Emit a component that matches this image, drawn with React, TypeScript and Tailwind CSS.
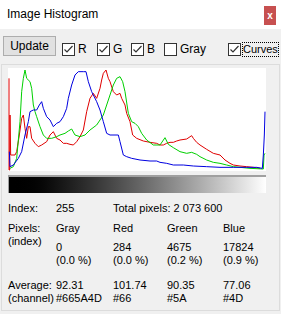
import React from "react";

const red =
  "27,70 27,345 29,345 30,180 32,300 45,300 50,290 58,240 65,190 70,180 75,220 80,250 85,215 90,215 95,250 105,265 115,275 125,270 140,260 150,240 160,230 170,250 180,255 190,265 200,265 210,268 220,270 230,260 240,245 250,225 260,170 270,130 280,115 290,130 300,100 305,75 310,55 318,45 325,70 330,80 340,110 350,120 360,115 365,130 375,150 380,175 390,200 398,240 410,250 430,258 450,262 470,265 480,270 490,270 500,265 510,262 520,262 530,258 540,255 560,252 575,242 580,250 590,262 600,270 620,283 640,295 660,300 675,315 690,325 700,330 720,333 740,335 760,337 780,340";

const green =
  "30,340 40,335 50,310 60,200 65,110 70,70 75,45 80,70 90,80 95,100 100,150 105,170 110,185 120,215 130,240 140,250 155,250 170,245 180,240 195,235 205,228 215,222 225,240 240,245 255,240 270,225 290,210 300,195 310,180 320,150 330,120 340,90 350,70 360,65 368,80 375,110 385,175 395,200 405,205 415,215 425,235 440,255 460,270 480,270 495,248 505,268 520,278 540,290 560,295 575,292 590,298 600,305 620,315 640,322 660,325 680,330 700,335 720,337 750,340 790,342 792,300 795,295";

const blue =
  "28,290 30,335 40,330 55,310 65,290 75,240 85,200 90,170 100,165 110,165 118,150 125,140 130,160 140,185 150,195 160,215 170,205 180,200 190,185 200,160 205,130 215,90 225,60 235,50 250,50 258,50 265,80 275,110 290,140 300,165 310,200 320,235 330,240 345,240 355,240 360,260 370,300 380,305 395,310 420,315 450,318 470,318 480,322 500,325 520,330 550,330 580,333 620,335 660,337 700,337 740,337 770,337 787,340 790,300 793,240 795,170";

function Check({ checked, label, focus, w }: { checked: boolean; label: string; focus?: boolean; w?: string }) {
  return (
    <div className={`flex items-center shrink-0 ${focus ? "gap-[1px]" : "gap-[3px]"} ${w ?? ""}`}>
      <div className="w-[13px] h-[13px] shrink-0 border border-[#333] bg-white flex items-center justify-center">
        {checked && (
          <svg width="11" height="11" viewBox="0 0 11 11">
            <polyline points="1.5,5.5 4,8 9.5,2" fill="none" stroke="#333" strokeWidth="1.2" />
          </svg>
        )}
      </div>
      <span className={focus ? "border border-dotted border-black text-[11px] leading-[11px] py-px" : ""}>{label}</span>
    </div>
  );
}

export default function App() {
  return (
    <div className="w-[281px] h-[314px] bg-[#f0f0f0] text-black font-['Liberation_Sans',Arial,sans-serif] text-[11px] overflow-hidden">
      <div className="h-[29px] bg-white flex justify-between pl-[7px] pr-[5px]">
        <span className="text-[12px] leading-[29px]">Image Histogram</span>
        <div className="mt-[6px] w-[12px] h-[19px] bg-[#c75050] text-white text-[10px] font-bold flex items-center justify-center">x</div>
      </div>
      <div className="h-[35px] flex items-start">
        <button className="shrink-0 ml-[3px] mt-[7px] w-[53px] h-[20px] bg-[#e1e1e1] border border-[#adadad] text-[12px] leading-none">Update</button>
        <div className="mt-[11px] ml-[6px] flex items-center text-[12px]">
          <Check checked label="R" w="w-[35px]" />
          <Check checked label="G" w="w-[34px]" />
          <Check checked label="B" w="w-[33px]" />
          <Check checked={false} label="Gray" w="w-[64px]" />
          <Check checked label="Curves" focus />
        </div>
      </div>
      <div className="mx-[1px] h-[247px] border border-[#dcdcdc] pl-[6px] pt-[3px]">
        <svg width="258" height="103" viewBox="24 39 774 309" preserveAspectRatio="none" className="block bg-white">
          <polyline points={red} fill="none" stroke="#e00000" strokeWidth="1" vectorEffect="non-scaling-stroke" />
          <polyline points={green} fill="none" stroke="#00d000" strokeWidth="1" vectorEffect="non-scaling-stroke" />
          <polyline points={blue} fill="none" stroke="#0000e0" strokeWidth="1" vectorEffect="non-scaling-stroke" />
        </svg>
        <div className="mt-[4px] w-[258px] h-[18px] border-t-2 border-l border-t-[#a0a0a0] border-l-[#a0a0a0] bg-gradient-to-r from-black to-white" />
        <div className="mt-[9px] grid grid-cols-[48px_57px_54px_56px_auto] leading-[13px]">
          <div>Index:</div>
          <div>255</div>
          <div className="col-span-3">Total pixels: 2 073 600</div>

          <div className="mt-[7px]">Pixels:<br />(index)</div>
          {[
            ["Gray", "0", "(0.0 %)"],
            ["Red", "284", "(0.0 %)"],
            ["Green", "4675", "(0.2 %)"],
            ["Blue", "17824", "(0.9 %)"],
          ].map(([h, v, p]) => (
            <div key={h} className="mt-[7px]">
              <div>{h}</div>
              <div className="mt-[6px]">{v}</div>
              <div>{p}</div>
            </div>
          ))}

          <div className="mt-[12px]">Average:<br />(channel)</div>
          {[
            ["92.31", "#665A4D"],
            ["101.74", "#66"],
            ["90.35", "#5A"],
            ["77.06", "#4D"],
          ].map(([a, c]) => (
            <div key={c} className="mt-[12px]">
              <div>{a}</div>
              <div>{c}</div>
            </div>
          ))}
        </div>
      </div>
    </div>
  );
}
